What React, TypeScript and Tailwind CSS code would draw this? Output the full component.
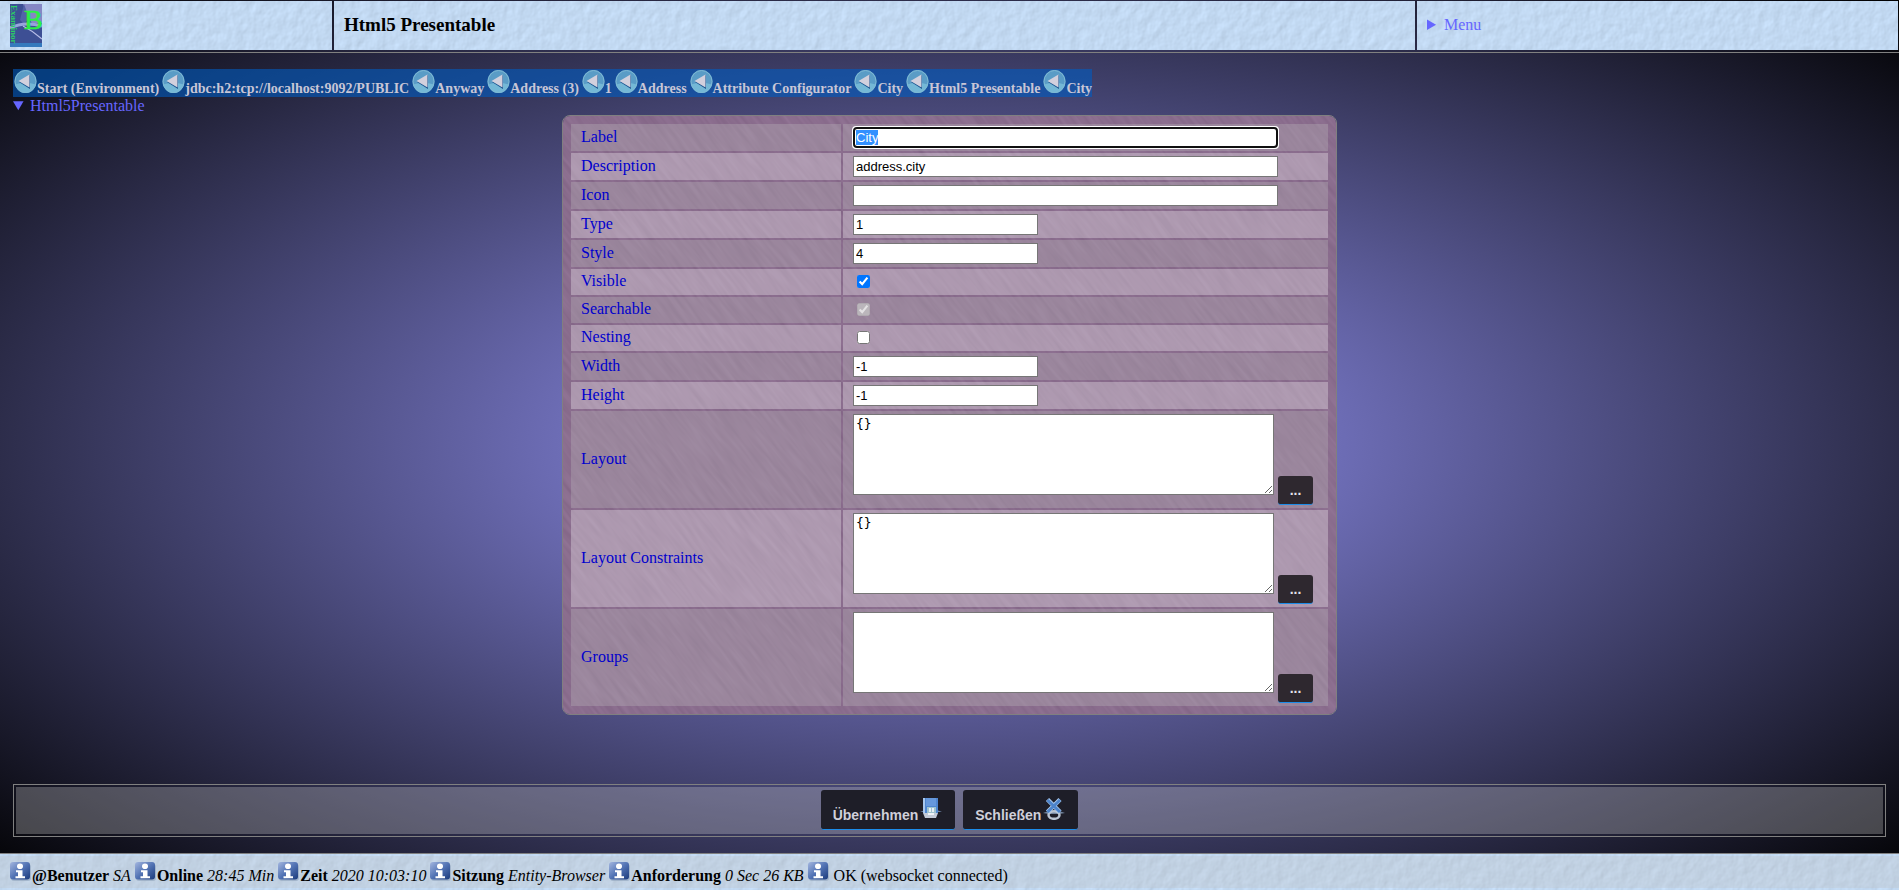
import { Fragment, useEffect, useRef } from "react";
import type { ReactNode } from "react";

function PaperTexture({ id }: { id: string }) {
  return (
    <svg aria-hidden="true" className="absolute inset-0 h-full w-full">
      <filter id={id} x="0" y="0" width="100%" height="100%" colorInterpolationFilters="sRGB">
        <feTurbulence type="fractalNoise" baseFrequency="0.1 0.08" numOctaves="3" seed="4" />
        <feColorMatrix values="0 0 0 0 0  0 0 0 0 0  0 0 0 0 0  1 0 0 0 0" />
        <feDiffuseLighting surfaceScale="0.35" diffuseConstant="1.17" lightingColor="#c3daf3">
          <feDistantLight azimuth="225" elevation="58" />
        </feDiffuseLighting>
      </filter>
      <rect width="100%" height="100%" filter={`url(#${id})`} />
    </svg>
  );
}

function StreakTexture() {
  return (
    <svg aria-hidden="true" className="absolute inset-0 h-full w-full">
      <filter id="streaks" x="0" y="0" width="100%" height="100%" colorInterpolationFilters="sRGB">
        <feTurbulence type="fractalNoise" baseFrequency="0.025 0.26" numOctaves="2" seed="9" />
        <feColorMatrix values="0.08 0 0 0 0.502  0.08 0 0 0 0.387  0.08 0 0 0 0.515  0 0 0 0 1" />
      </filter>
      <rect x="-200" y="-900" width="1500" height="1700" transform="rotate(52)" filter="url(#streaks)" />
    </svg>
  );
}

function Logo() {
  return (
    <svg width="32" height="43" viewBox="0 0 32 43" role="img" aria-label="Logo">
      <rect width="32" height="43" fill="#3d4f94" />
      <path d="M13 0h19v19l-10 1z" fill="#8587c4" />
      <path d="M14 0l5 14-5 6-4-4z" fill="#5263a8" />
      <path d="M0 24Q14 17 32 22" stroke="#98a4dc" strokeWidth="3" fill="none" />
      <path d="M13 22Q23 27 32 35" stroke="#b7bde8" strokeWidth="1.2" fill="none" />
      <rect y="39" width="32" height="4" fill="#3579bd" />
      <text x="14" y="25" fontFamily="Liberation Serif, serif" fontSize="28" fill="#2bf045" stroke="#2bf045" strokeWidth="0.6">
        B
      </text>
      <text transform="translate(1 1) rotate(90)" fontFamily="Liberation Serif, serif" fontWeight="bold" fontSize="9" fill="#2bd065">
        Examinor
      </text>
    </svg>
  );
}

function BackIcon() {
  return (
    <svg width="24" height="24" viewBox="0 0 24 24" aria-hidden="true">
      <ellipse cx="12.500" cy="12.500" rx="11" ry="11.500" fill="#5a9cc6" />
      <path d="M2 15.500Q12 12 23 15.500Q20 24 12.500 24Q5 24 2 15.500z" fill="#74b8d6" />
      <ellipse cx="12.500" cy="12.500" rx="10.500" ry="11" fill="none" stroke="#7fb9d4" />
      <path d="M17 6v14L6 13z" fill="#16508e" />
      <path d="M16.500 5.500v13L5.500 12z" fill="#d2d0dd" />
    </svg>
  );
}

function InfoIcon() {
  return (
    <svg width="22" height="19" viewBox="0 0 22 19" aria-hidden="true" className="inline-block align-baseline">
      <defs>
        <linearGradient id="info" x1="0" y1="0" x2="1" y2="1">
          <stop offset="0" stopColor="#a3b6df" />
          <stop offset="0.5" stopColor="#5273b4" />
          <stop offset="1" stopColor="#1b3a7b" />
        </linearGradient>
      </defs>
      <rect x="1" y="2" width="20" height="17" rx="3" fill="#8fa3bd" opacity="0.6" />
      <rect width="20" height="17.500" rx="3" fill="url(#info)" />
      <ellipse cx="10" cy="4.200" rx="3" ry="2.800" fill="#fff" />
      <path d="M6 8.300h6.500v6H15v2H5.500v-2H8v-4H6z" fill="#fff" />
    </svg>
  );
}

function SaveIcon() {
  return (
    <svg width="22" height="23" viewBox="0 0 22 23" aria-hidden="true">
      <path d="M0 15h22l-5-2H5z" fill="#6f86a8" />
      <path d="M3 1h15v15H3z" fill="#4f86d0" />
      <path d="M3 1h2v15H3z" fill="#a8c8ee" />
      <path d="M6 1h10v8H6z" fill="#6698dc" />
      <path d="M7 10h9v6H7z" fill="#9ec3cf" />
      <path d="M9 11h2v4H9zM12 11h2v4h-2z" fill="#e8eff3" />
      <path d="M3 16h15l-2 5H5z" fill="#c3cbd8" />
      <path d="M8 16h6v2H8z" fill="#f0f3f7" />
    </svg>
  );
}

function CloseIcon() {
  return (
    <svg width="22" height="23" viewBox="0 0 22 23" aria-hidden="true">
      <path d="M0 16l6-2h10l6 2-6 1H6z" fill="#74869f" />
      <ellipse cx="11" cy="18" rx="5.500" ry="3.800" fill="none" stroke="#bcc5d3" strokeWidth="2.500" />
      <path d="M4.500 2.500L17 15M17 2.500L4.500 15" stroke="#a8c8ee" strokeWidth="4.500" />
      <path d="M4.500 3L17 15M17 3L4.500 15" stroke="#4c83cb" strokeWidth="3" />
    </svg>
  );
}

const crumbs = [
  "Start (Environment)",
  "jdbc:h2:tcp://localhost:9092/PUBLIC",
  "Anyway",
  "Address (3)",
  "1",
  "Address",
  "Attribute Configurator",
  "City",
  "Html5 Presentable",
  "City",
];

type Field = { label: string; kind: "text" | "number" | "check" | "area"; value?: string; checked?: boolean; disabled?: boolean };

const fields: Field[] = [
  { label: "Label", kind: "text", value: "City" },
  { label: "Description", kind: "text", value: "address.city" },
  { label: "Icon", kind: "text", value: "" },
  { label: "Type", kind: "number", value: "1" },
  { label: "Style", kind: "number", value: "4" },
  { label: "Visible", kind: "check", checked: true },
  { label: "Searchable", kind: "check", checked: true, disabled: true },
  { label: "Nesting", kind: "check", checked: false },
  { label: "Width", kind: "number", value: "-1" },
  { label: "Height", kind: "number", value: "-1" },
  { label: "Layout", kind: "area", value: "{}" },
  { label: "Layout Constraints", kind: "area", value: "{}" },
  { label: "Groups", kind: "area", value: "" },
];

const inputClass =
  "block h-[21px] border border-[#767676] bg-white px-[2px] font-['Liberation_Sans',Arial,sans-serif] text-[13px] text-black selection:bg-[#3390ff] selection:text-white";

function FieldControl({ field, id }: { field: Field; id: string }) {
  const ref = useRef<HTMLInputElement>(null);
  useEffect(() => {
    if (field.label === "Label") {
      ref.current?.focus();
      ref.current?.select();
    }
  }, [field.label]);

  if (field.kind === "check") {
    return (
      <input
        id={id}
        type="checkbox"
        defaultChecked={field.checked}
        disabled={field.disabled}
        className="ml-1 block h-[13px] w-[13px]"
      />
    );
  }
  if (field.kind === "area") {
    return (
      <div className="flex items-end gap-1">
        <textarea
          id={id}
          defaultValue={field.value}
          className="mb-[10px] block h-[81px] w-[421px] resize border border-[#767676] bg-white px-[2px] py-px font-['DejaVu_Sans_Mono',monospace] text-[13px] leading-[15px] text-black"
        />
        <button
          type="button"
          aria-label={`${field.label} bearbeiten`}
          className="h-[29px] w-[35px] rounded-[3px] border-b border-[#1c8ce8] bg-[#2e282f] font-['Liberation_Sans',Arial,sans-serif] text-[14px] leading-4 font-bold text-[#e4e4ea]"
        >
          ...
        </button>
      </div>
    );
  }
  return (
    <input
      ref={ref}
      id={id}
      type="text"
      defaultValue={field.value}
      className={field.kind === "text" ? `${inputClass} w-[425px]` : `${inputClass} w-[185px]`}
    />
  );
}

function ActionButton({ label, icon }: { label: string; icon: ReactNode }) {
  return (
    <button
      type="button"
      className="flex h-10 items-start rounded-[3px] border-b border-[#1c8ce8] bg-[#1e1e28] pt-[7px] pr-[13px] pl-3 font-['Liberation_Sans',Arial,sans-serif] text-[14px] font-bold text-[#d0d0da]"
    >
      <span className="pt-2 leading-5">{label}</span>
      <span className="ml-[2px]">{icon}</span>
    </button>
  );
}

const status: [string, string][] = [
  ["@Benutzer", "SA"],
  ["Online", "28:45 Min"],
  ["Zeit", "2020 10:03:10"],
  ["Sitzung", "Entity-Browser"],
  ["Anforderung", "0 Sec 26 KB"],
];

export default function App() {
  return (
    <div className="flex min-h-screen flex-col bg-[radial-gradient(#9999ff,#000000)] font-['Liberation_Serif','Times_New_Roman',serif] text-base text-black">
      <header className="grid h-[53px] shrink-0 grid-cols-[332fr_1081fr_481fr] gap-[2px] border-b border-[#808080] pt-px pr-px pb-[2px]">
        <div className="relative flex items-center overflow-hidden pl-[10px]">
          <PaperTexture id="paper-logo" />
          <div className="relative">
            <Logo />
          </div>
        </div>
        <div className="relative flex items-center overflow-hidden pl-[10px]">
          <PaperTexture id="paper-title" />
          <h1 className="relative text-[19px] font-bold">Html5 Presentable</h1>
        </div>
        <div className="relative flex items-center overflow-hidden pb-[2px] pl-[10px]">
          <PaperTexture id="paper-menu" />
          <details className="relative">
            <summary className="text-[#6666ff]">Menu</summary>
          </details>
        </div>
      </header>

      <main className="flex flex-1 flex-col px-[13px] pt-4">
        <nav aria-label="Breadcrumb" className="flex h-7 gap-[2px] self-start bg-[#005cc2]/60">
          {crumbs.map((crumb, i) => (
            <a key={i} href="#" className="flex text-[14px] font-bold whitespace-nowrap text-[#c8c6d6]">
              <BackIcon />
              <span className="pt-[10px] leading-5">{crumb}</span>
            </a>
          ))}
        </nav>

        <details open>
          <summary className="h-[18px] leading-[18px] text-[#6666ff]">Html5Presentable</summary>
          <form
            className="relative mx-auto w-fit overflow-hidden rounded-lg border border-[#808080] p-[6px]"
            onSubmit={(e) => e.preventDefault()}
          >
            <StreakTexture />
            <table className="relative border-separate border-spacing-[2px]">
              <tbody>
                {fields.map((field, i) => {
                  const id = `field-${i}`;
                  return (
                    <tr key={field.label} className="odd:bg-[#c0c0c0]/30 even:bg-white/30">
                      <th scope="row" className="w-[270px] px-[10px] pt-0 pb-[2px] text-left font-normal text-[#0000cd]">
                        <label htmlFor={id} className="leading-6">
                          {field.label}
                        </label>
                      </th>
                      <td
                        className={
                          field.kind === "check"
                            ? "h-[26px] w-[485px] px-[10px] pt-0 pb-[2px]"
                            : "w-[485px] px-[10px] py-[3px]"
                        }
                      >
                        <FieldControl field={field} id={id} />
                      </td>
                    </tr>
                  );
                })}
              </tbody>
            </table>
          </form>
        </details>

        <div className="mt-auto mb-4 border border-[#808080] p-[2px]">
          <div className="flex justify-center gap-2 bg-[#d3d3d3]/30 px-1 pt-[3px] pb-1">
            <ActionButton label="Übernehmen" icon={<SaveIcon />} />
            <ActionButton label="Schließen" icon={<CloseIcon />} />
          </div>
        </div>
      </main>

      <footer className="relative h-[37px] shrink-0 overflow-hidden border-t border-[#808080]">
        <PaperTexture id="paper-status" />
        <div className="relative my-[2px] h-[32px] bg-[#c0c0c0]/30 pt-[6px] pl-[10px] leading-6 whitespace-nowrap">
          {status.map(([name, value]) => (
            <Fragment key={name}>
              <InfoIcon />
              <b>{name}</b> <i>{value}</i>{" "}
            </Fragment>
          ))}
          <InfoIcon /> OK (websocket connected)
        </div>
      </footer>
    </div>
  );
}
